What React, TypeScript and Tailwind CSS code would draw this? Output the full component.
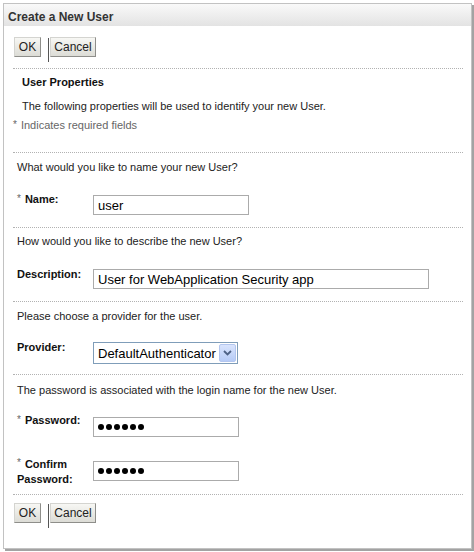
import React from "react";

const Btn = ({ label, w }: { label: string; w: string }) => (
  <div
    className={`${w} flex h-[20px] items-center justify-center border border-t-[#d4d4d0] border-l-[#d4d4d0] border-b-[#8e8e8a] border-r-[#8e8e8a] bg-gradient-to-b from-[#f7f7f4] to-[#dcdcd6] text-[12px] leading-[14px] text-[#222]`}
  >
    {label}
  </div>
);

const ButtonRow = ({ className }: { className: string }) => (
  <div className={`${className} ml-[1px] flex items-start`}>
    <Btn label="OK" w="w-[27px]" />
    <div className="ml-[7px] mt-[1px] h-[24px] w-px bg-[#555]" />
    <div className="ml-[1px]">
      <Btn label="Cancel" w="w-[46px]" />
    </div>
  </div>
);

const Sep = ({ className }: { className: string }) => (
  <div className={`${className} h-0 border-t border-dotted border-[#b2b2b2]`} />
);

const Star = () => (
  <span className="mr-[4px] align-top text-[10px] font-normal leading-[11px] text-[#666]">*</span>
);

const Dots = () => (
  <div className="flex gap-[2px] pl-[4px]">
    {[0, 1, 2, 3, 4, 5].map((i) => (
      <div key={i} className="h-[6px] w-[6px] rounded-full bg-black" />
    ))}
  </div>
);

export default function App() {
  return (
    <div className="min-h-[552px] w-[474px] bg-white pl-[3px] pt-[3px] font-['Liberation_Sans',Arial,sans-serif]">
      <div className="flex h-[546px] w-[469px] flex-col border border-[#c2c2c2] bg-white shadow-[2px_2px_0_#a3a3a3]">
        <div className="h-[22px] bg-gradient-to-b from-[#f9f9f9] to-[#e3e3e3] pl-[4px] pt-[6px] text-[12px] font-bold leading-[15px] text-[#333]">
          Create a New User
        </div>
        <div className="flex flex-col pl-[9px] pr-[8px] text-[11px] leading-[13px] text-[#222]">
          <ButtonRow className="mt-[11px] h-[25px]" />
          <Sep className="mt-[6px]" />
          <div className="ml-[9px] mt-[7px] font-bold text-[#111]">User Properties</div>
          <div className="ml-[9px] mt-[11px]">
            The following properties will be used to identify your new User.
          </div>
          <div className="mt-[6px] text-[#666]">
            <span className="mr-[4px] align-top text-[10px] leading-[11px]">*</span>Indicates required fields
          </div>

          <Sep className="mt-[20px]" />
          <div className="ml-[4px] mt-[8px]">What would you like to name your new User?</div>
          <div className="ml-[4px] mt-[19px] flex items-start">
            <div className="w-[76px] font-bold text-[#111]">
              <Star />
              Name:
            </div>
            <div className="mt-[2px] flex h-[20px] w-[156px] items-center border border-[#ababab] bg-white pl-[4px] text-[13px] leading-[15px] text-black">
              user
            </div>
          </div>

          <Sep className="mt-[12px]" />
          <div className="ml-[4px] mt-[7px]">How would you like to describe the new User?</div>
          <div className="ml-[4px] mt-[20px] flex items-start">
            <div className="w-[76px] font-bold text-[#111]">Description:</div>
            <div className="mt-[1px] flex h-[20px] w-[336px] items-center border border-[#ababab] bg-white pl-[4px] text-[13px] leading-[15px] text-black">
              User for WebApplication Security app
            </div>
          </div>

          <Sep className="mt-[12px]" />
          <div className="ml-[4px] mt-[8px]">Please choose a provider for the user.</div>
          <div className="ml-[4px] mt-[18px] flex items-start">
            <div className="w-[76px] font-bold text-[#111]">Provider:</div>
            <div className="mt-[1px] flex h-[22px] w-[145px] items-center justify-between border border-[#7f9db9] bg-white pl-[4px] pr-[1px] text-[13px] leading-[15px] text-black">
              <span>DefaultAuthenticator</span>
              <div className="flex h-[18px] w-[17px] items-center justify-center rounded-[2px] border border-[#b3c6ef] bg-gradient-to-b from-[#d9e4fd] to-[#b6cbf6]">
                <svg width="9" height="6" viewBox="0 0 9 6">
                  <path d="M1 1 L4.5 4.5 L8 1" fill="none" stroke="#4d6185" strokeWidth="1.8" />
                </svg>
              </div>
            </div>
          </div>

          <Sep className="mt-[10px]" />
          <div className="ml-[4px] mt-[9px]">The password is associated with the login name for the new User.</div>
          <div className="ml-[4px] mt-[17px] flex items-start">
            <div className="w-[76px] font-bold text-[#111]">
              <Star />
              Password:
            </div>
            <div className="mt-[3px] flex h-[20px] w-[146px] items-center border border-[#ababab] bg-white">
              <Dots />
            </div>
          </div>
          <div className="ml-[4px] mt-[20px] flex items-start">
            <div className="w-[76px] font-bold leading-[15px] text-[#111]">
              <Star />
              Confirm
              <br />
              Password:
            </div>
            <div className="mt-[4px] flex h-[20px] w-[146px] items-center border border-[#ababab] bg-white">
              <Dots />
            </div>
          </div>

          <Sep className="mt-[7px]" />
          <ButtonRow className="mt-[8px] h-[25px]" />
        </div>
      </div>
    </div>
  );
}
